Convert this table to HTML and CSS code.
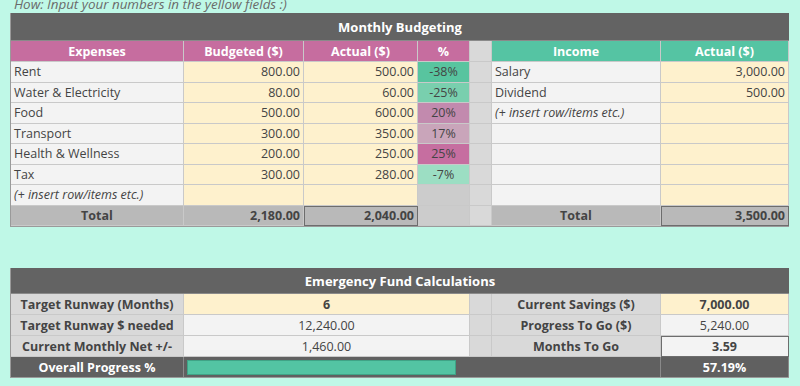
FILE: index.html
```html
<!DOCTYPE html>
<html>
<head>
<meta charset="utf-8">
<link rel="stylesheet" href="styles.css">
</head>
<body>
<div class="page">
  <div class="note">How: Input your numbers in the yellow fields :)</div>

  <div class="sheet budget">
    <div class="title span-all">Monthly Budgeting</div>

    <div class="c hd pink center">Expenses</div>
    <div class="c hd pink center">Budgeted ($)</div>
    <div class="c hd pink center">Actual ($)</div>
    <div class="c hd pink center">%</div>
    <div class="c gap"></div>
    <div class="c hd teal center">Income</div>
    <div class="c hd teal center">Actual ($)</div>

    <div class="c light">Rent</div>
    <div class="c yellow right">800.00</div>
    <div class="c yellow right">500.00</div>
    <div class="c pct p-38 center">-38%</div>
    <div class="c gap"></div>
    <div class="c light">Salary</div>
    <div class="c yellow right">3,000.00</div>

    <div class="c light">Water &amp; Electricity</div>
    <div class="c yellow right">80.00</div>
    <div class="c yellow right">60.00</div>
    <div class="c pct p-25 center">-25%</div>
    <div class="c gap"></div>
    <div class="c light">Dividend</div>
    <div class="c yellow right">500.00</div>

    <div class="c light">Food</div>
    <div class="c yellow right">500.00</div>
    <div class="c yellow right">600.00</div>
    <div class="c pct p20 center">20%</div>
    <div class="c gap"></div>
    <div class="c light ital">(+ insert row/items etc.)</div>
    <div class="c yellow right"></div>

    <div class="c light">Transport</div>
    <div class="c yellow right">300.00</div>
    <div class="c yellow right">350.00</div>
    <div class="c pct p17 center">17%</div>
    <div class="c gap"></div>
    <div class="c light"></div>
    <div class="c yellow"></div>

    <div class="c light">Health &amp; Wellness</div>
    <div class="c yellow right">200.00</div>
    <div class="c yellow right">250.00</div>
    <div class="c pct p25 center">25%</div>
    <div class="c gap"></div>
    <div class="c light"></div>
    <div class="c yellow"></div>

    <div class="c light">Tax</div>
    <div class="c yellow right">300.00</div>
    <div class="c yellow right">280.00</div>
    <div class="c pct p-7 center">-7%</div>
    <div class="c gap"></div>
    <div class="c light"></div>
    <div class="c yellow"></div>

    <div class="c light ital">(+ insert row/items etc.)</div>
    <div class="c yellow"></div>
    <div class="c yellow"></div>
    <div class="c pct empty"></div>
    <div class="c gap"></div>
    <div class="c light"></div>
    <div class="c yellow"></div>

    <div class="c total bold center">Total</div>
    <div class="c total bold right">2,180.00</div>
    <div class="c total bold right boxed">2,040.00</div>
    <div class="c pct empty"></div>
    <div class="c gap"></div>
    <div class="c total bold center">Total</div>
    <div class="c total bold right boxed">3,500.00</div>
  </div>

  <div class="sheet fund">
    <div class="title span-all">Emergency Fund Calculations</div>

    <div class="c label bold center">Target Runway (Months)</div>
    <div class="c yellow bold center">6</div>
    <div class="c gap"></div>
    <div class="c label bold center">Current Savings ($)</div>
    <div class="c yellow bold center">7,000.00</div>

    <div class="c label bold center">Target Runway $ needed</div>
    <div class="c light center">12,240.00</div>
    <div class="c gap"></div>
    <div class="c label bold center">Progress To Go ($)</div>
    <div class="c light center">5,240.00</div>

    <div class="c label bold center">Current Monthly Net +/-</div>
    <div class="c light center">1,460.00</div>
    <div class="c gap"></div>
    <div class="c label bold center">Months To Go</div>
    <div class="c light bold center boxed">3.59</div>

    <div class="c dark bold center">Overall Progress %</div>
    <div class="c dark barcell"><div class="bar" style="width: 57.19%"></div></div>
    <div class="c dark bold center">57.19%</div>
  </div>
</div>
</body>
</html>
```

FILE: styles.css
```css
* { box-sizing: border-box; }

html, body {
  margin: 0;
  padding: 0;
  background: #bff8e7;
}

body {
  font-family: "Open Sans", "DejaVu Sans", sans-serif;
  font-size: 12.5px;
  color: #444;
}

.page {
  padding-left: 10px;
  width: 800px;
  height: 386px;
  overflow: hidden;
}

.note {
  height: 13px;
  line-height: 13px;
  margin-top: -2px;
  margin-bottom: 2px;
  padding-left: 4px;
  font-style: italic;
  font-size: 13.4px;
  color: #6a6a6a;
}

.sheet {
  display: grid;
  width: 779px;
  border: 1px solid #9a9a9a;
  border-top: none;
}

.budget {
  grid-template-columns: 173px 120px 114px 52px 22px 169px 128px;
  grid-template-rows: 28px 21px repeat(8, 20.5px);
}

.fund {
  margin-top: 41px;
  grid-template-columns: 173px 286px 22px 169px 128px;
  grid-template-rows: 26px 21px 21px 21px 20px;
}

.span-all { grid-column: 1 / -1; }

.title {
  background: #636363;
  color: #fff;
  font-weight: 700;
  font-size: 13px;
  display: flex;
  align-items: center;
  justify-content: center;
  border-bottom: 1px solid #8a8a8a;
}

.c {
  display: flex;
  align-items: center;
  padding: 0 3px;
  white-space: nowrap;
  overflow: hidden;
  border-right: 1px solid #c9c9c9;
  border-bottom: 1px solid #c9c9c9;
}

.center { justify-content: center; }
.right { justify-content: flex-end; }
.bold { font-weight: 700; }
.ital { font-style: italic; }

.hd { color: #fff; font-weight: 700; }
.pink { background: #c66d9f; }
.teal { background: #55c4a3; }

.light { background: #f3f3f3; }
.yellow { background: #fef1cd; }
.gap { background: #d9d9d9; padding: 0; }

.pct.p-38 { background: #58c49f; }
.pct.p-25 { background: #79cfae; }
.pct.p20 { background: #c28aae; }
.pct.p17 { background: #c9a5ba; }
.pct.p25 { background: #c66ea0; }
.pct.p-7 { background: #9cdec3; }
.pct.empty { background: #cccccc; }

.total { background: #b9b9b9; }
.boxed { outline: 1px solid #6d6d6d; outline-offset: -1px; }

.label { background: #d9d9d9; }

.dark {
  background: #606060;
  color: #fff;
  border-bottom: none;
  border-right: 1px solid #8a8a8a;
}

.barcell {
  grid-column: 2 / 5;
  padding: 3px 3px 2px 3px;
  align-items: stretch;
}

.bar {
  background: #53c4a3;
  border: 1px solid #3fa386;
}
```
